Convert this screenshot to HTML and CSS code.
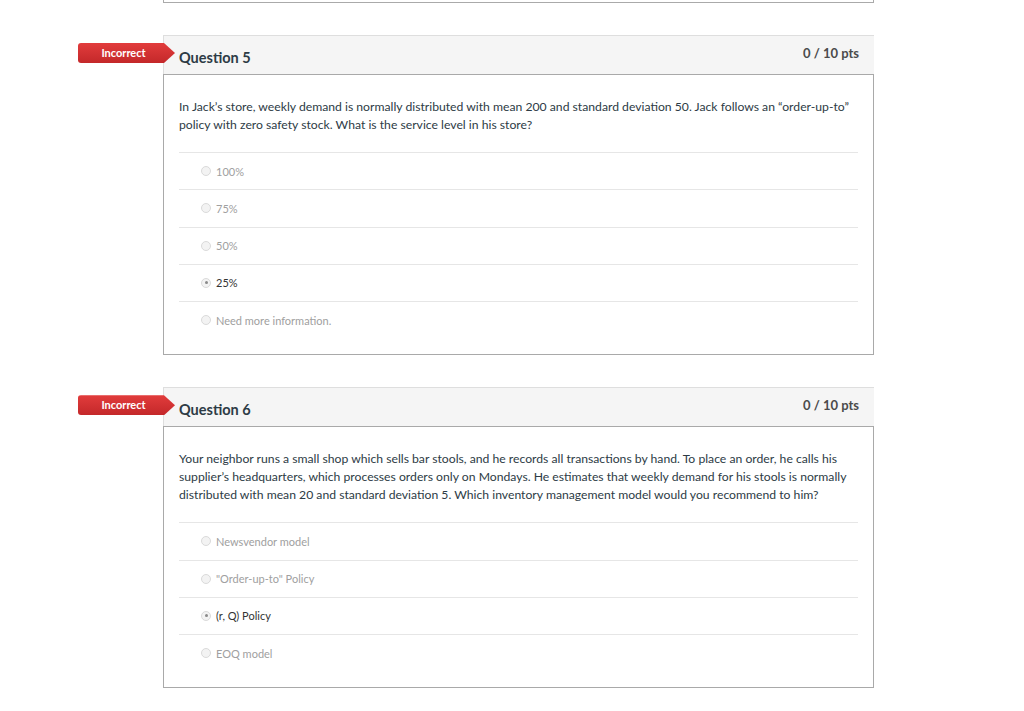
FILE: index.html
```html
<!DOCTYPE html>
<html>
<head>
<meta charset="utf-8">
<link rel="stylesheet" href="styles.css">
</head>
<body>
<div class="quiz">
  <div class="prev-card"></div>

  <div class="question">
    <div class="badge">Incorrect</div>
    <div class="q-header">
      <span class="q-title">Question 5</span>
      <span class="q-points">0 / 10 pts</span>
    </div>
    <div class="q-body">
      <p class="q-text">In Jack’s store, weekly demand is normally distributed with mean 200 and standard deviation 50. Jack follows an “order-up-to” policy with zero safety stock. What is the service level in his store?</p>
      <ul class="answers">
        <li class="answer"><span class="radio"></span><span>100%</span></li>
        <li class="answer"><span class="radio"></span><span>75%</span></li>
        <li class="answer"><span class="radio"></span><span>50%</span></li>
        <li class="answer selected"><span class="radio"></span><span>25%</span></li>
        <li class="answer"><span class="radio"></span><span>Need more information.</span></li>
      </ul>
    </div>
  </div>

  <div class="question">
    <div class="badge">Incorrect</div>
    <div class="q-header">
      <span class="q-title">Question 6</span>
      <span class="q-points">0 / 10 pts</span>
    </div>
    <div class="q-body">
      <p class="q-text">Your neighbor runs a small shop which sells bar stools, and he records all transactions by hand. To place an order, he calls his supplier’s headquarters, which processes orders only on Mondays. He estimates that weekly demand for his stools is normally distributed with mean 20 and standard deviation 5. Which inventory management model would you recommend to him?</p>
      <ul class="answers">
        <li class="answer"><span class="radio"></span><span>Newsvendor model</span></li>
        <li class="answer"><span class="radio"></span><span>"Order-up-to" Policy</span></li>
        <li class="answer selected"><span class="radio"></span><span>(r, Q) Policy</span></li>
        <li class="answer"><span class="radio"></span><span>EOQ model</span></li>
      </ul>
    </div>
  </div>
</div>
</body>
</html>
```

FILE: styles.css
```css
html, body {
  margin: 0;
  padding: 0;
  background: #fff;
}
body {
  font-family: Lato, "Open Sans", sans-serif;
  color: #2d3b45;
}
.quiz {
  width: 711px;
  margin-left: 163px;
}
.prev-card {
  height: 2px;
  border: 1px solid #aaaaaa;
  border-top: none;
}
.question {
  position: relative;
  margin-top: 32px;
}
.badge {
  position: absolute;
  left: -85px;
  top: 8px;
  width: 97px;
  height: 20px;
  line-height: 19px;
  padding-right: 6px;
  box-sizing: border-box;
  text-align: center;
  color: #fff;
  font-size: 11px;
  font-weight: 700;
  background: linear-gradient(#e23c3c, #c4282a);
  clip-path: polygon(0 0, 86px 0, 97px 10px, 86px 20px, 0 20px);
  border-radius: 3px 0 0 3px;
  z-index: 2;
}
.q-header {
  display: flex;
  justify-content: space-between;
  align-items: flex-start;
  height: 38px;
  padding: 0 15px 0 15px;
  background: #f5f5f5;
  border-top: 1px solid #dedede;
  border-left: 1px solid #dedede;
}
.q-title {
  margin-top: 12px;
  font-size: 14.5px;
  line-height: 20px;
  font-weight: 700;
  color: #2d3b45;
}
.q-points {
  margin-top: 8px;
  font-size: 13px;
  line-height: 18px;
  font-weight: 700;
  color: #4b4b4b;
}
.q-body {
  border: 1px solid #a9a9a9;
  padding: 23px 15px 16px 15px;
}
.q-text {
  margin: 0 0 18px 0;
  font-size: 12.2px;
  line-height: 18px;
  color: #2d3b45;
}
.answers {
  list-style: none;
  margin: 0;
  padding: 0;
}
.answer {
  display: flex;
  align-items: center;
  gap: 5px;
  height: 36.25px;
  padding-left: 22px;
  border-top: 1px solid #e6e6e6;
  font-size: 11px;
  color: #a0a0a0;
}
.radio {
  width: 10px;
  height: 10px;
  box-sizing: border-box;
  border-radius: 50%;
  border: 1px solid #dadada;
  background: #f3f3f3;
  position: relative;
}
.answer.selected {
  color: #333;
}
.answer.selected .radio::after {
  content: "";
  position: absolute;
  left: 2.5px;
  top: 2.5px;
  width: 3px;
  height: 3px;
  border-radius: 50%;
  background: #8a8a8a;
}
```
